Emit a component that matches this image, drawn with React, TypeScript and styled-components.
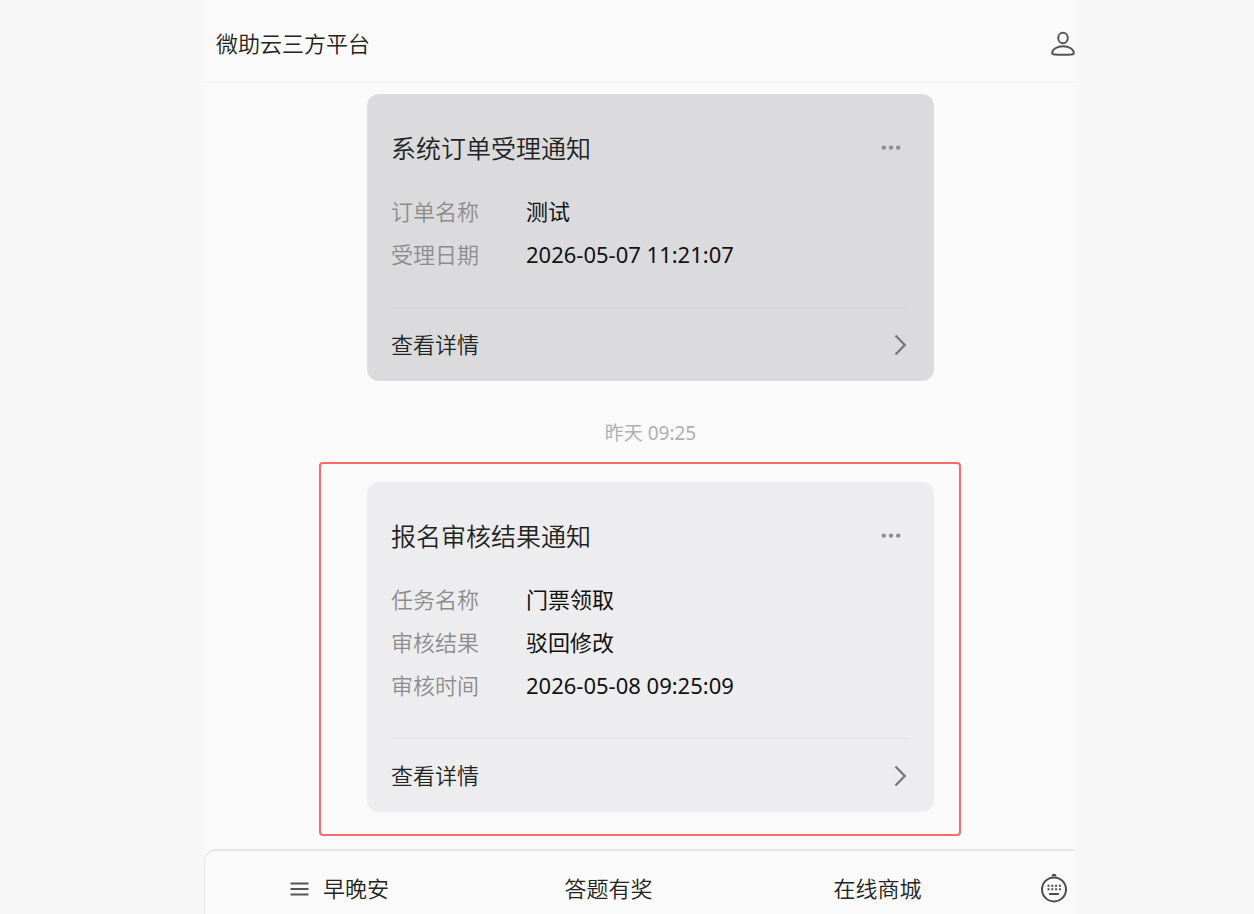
import React from "react";
import styled, { createGlobalStyle } from "styled-components";

const GlobalStyle = createGlobalStyle`
  *, *::before, *::after { box-sizing: border-box; }
  body {
    margin: 0;
    background: #f7f7f7;
    font-family: "Noto Sans", "Noto Sans CJK SC", sans-serif;
    font-size: 22px;
    font-weight: 350;
    line-height: 36px;
    color: #222;
  }
  button {
    border: 0;
    padding: 0;
    background: none;
    font: inherit;
    color: inherit;
    cursor: pointer;
  }
  svg { display: block; }
`;

const Page = styled.div`
  display: grid;
  grid-template-columns: 204fr 871fr 179fr;
  min-height: 100vh;
`;

const Panel = styled.div`
  grid-column: 2;
  display: flex;
  flex-direction: column;
  min-width: 0;
  background: #fafafa;
`;

const Header = styled.header`
  display: flex;
  align-items: center;
  justify-content: space-between;
  padding: 25px 0 20px 12px;
  border-bottom: 2px solid #f3f3f3;
`;

const HeaderTitle = styled.h1`
  margin: 0;
  font-size: 22px;
  font-weight: inherit;
`;

const Messages = styled.main`
  flex: 1;
  display: flex;
  flex-direction: column;
  padding: 11px 114px 13px 115px;
`;

const Message = styled.div`
  padding: 0 27px 0 48px;
`;

const Highlight = styled.div`
  padding: 18px 25px 22px 46px;
  border: 2px solid #fb6a6a;
  border-radius: 4px;
`;

const TimeStamp = styled.time`
  display: block;
  padding: 38px 27px 15px 48px;
  text-align: center;
  font-size: 19px;
  font-weight: 400;
  line-height: 28px;
  color: #b0b0b4;
`;

const Card = styled.article<{ $pressed?: boolean }>`
  padding: 36px 24px 0;
  border-radius: 12px;
  background: ${(p) => (p.$pressed ? "#dbdbdd" : "#ededef")};
`;

const CardHead = styled.div`
  display: flex;
  align-items: center;
  justify-content: space-between;
`;

const CardTitle = styled.h2`
  margin: 0;
  font-size: 25px;
  font-weight: inherit;
`;

const MoreButton = styled.button`
  padding: 8px;
`;

const Fields = styled.dl`
  margin: 24px 0 31px;
`;

const Field = styled.div`
  display: flex;
  line-height: 43px;
`;

const Label = styled.dt`
  width: 135px;
  color: #8c8c8d;
`;

const Value = styled.dd`
  margin: 0;
  font-weight: 400;
  color: #111;
`;

const DetailLink = styled.a`
  display: flex;
  align-items: center;
  justify-content: space-between;
  height: 74px;
  padding-bottom: 2px;
  border-top: 1px solid rgba(0, 0, 0, 0.04);
  color: inherit;
  text-decoration: none;
`;

const Footer = styled.footer`
  display: flex;
  align-items: center;
  padding: 19px 0 8px;
  border-top: 2px solid #e6e6e6;
  border-left: 1px solid #e6e6e6;
  border-top-left-radius: 12px;
`;

const Menu = styled.nav`
  flex: 1;
  display: grid;
  grid-template-columns: repeat(3, 1fr);
`;

const MenuButton = styled.button`
  display: flex;
  align-items: center;
  justify-content: center;
  gap: 14px;
`;

const KeyboardButton = styled.button`
  display: flex;
  justify-content: flex-end;
  width: 63px;
  padding-right: 7px;
`;

const PersonIcon = () => (
  <svg width="24" height="26" viewBox="0 0 24 26" fill="none" stroke="#555" strokeWidth="2" aria-hidden="true">
    <ellipse cx="12" cy="8" rx="4.8" ry="5.2" />
    <path d="M1.2 23C1.2 19.4 6 16.2 12 16.2S22.8 19.4 22.8 23C22.8 24.1 22 24.3 20.5 24.4C15 24.9 9 24.9 3.5 24.4C2 24.3 1.2 24.1 1.2 23Z" />
  </svg>
);

const DotsIcon = () => (
  <svg width="22" height="6" viewBox="0 0 22 6" fill="#8e8e90" aria-hidden="true">
    <circle cx="3.8" cy="2.6" r="2.2" />
    <circle cx="11" cy="2.6" r="2.2" />
    <circle cx="18.2" cy="2.6" r="2.2" />
  </svg>
);

const ChevronIcon = () => (
  <svg width="18" height="22" viewBox="0 0 18 22" fill="none" stroke="#777779" strokeWidth="2.3" aria-hidden="true">
    <path d="M3.5 2.5L12.8 12L3.5 21.5" />
  </svg>
);

const MenuIcon = () => (
  <svg width="19" height="16" viewBox="0 0 19 16" stroke="#555" strokeWidth="2" aria-hidden="true">
    <path d="M0.5 3.5H18.5M0.5 9H18.5M0.5 14.5H18.5" />
  </svg>
);

const KeyboardIcon = () => (
  <svg width="28" height="32" viewBox="0 0 28 32" fill="none" stroke="#4c4c4c" strokeWidth="2" aria-hidden="true">
    <circle cx="14" cy="17.4" r="12" />
    <path d="M11.5 4.2C11.8 1 16.2 1 16.5 4.2Z" fill="#4c4c4c" stroke="none" />
    <path d="M7.5 13.8H21M7.5 17.2H21" strokeDasharray="2 1.8" />
    <path d="M9.8 22H18.2" strokeLinecap="round" />
  </svg>
);

type Notice = { title: string; fields: [string, string][] };

const orderNotice: Notice = {
  title: "系统订单受理通知",
  fields: [
    ["订单名称", "测试"],
    ["受理日期", "2026-05-07 11:21:07"],
  ],
};

const reviewNotice: Notice = {
  title: "报名审核结果通知",
  fields: [
    ["任务名称", "门票领取"],
    ["审核结果", "驳回修改"],
    ["审核时间", "2026-05-08 09:25:09"],
  ],
};

function NoticeCard({ notice, pressed }: { notice: Notice; pressed?: boolean }) {
  return (
    <Card $pressed={pressed}>
      <CardHead>
        <CardTitle>{notice.title}</CardTitle>
        <MoreButton type="button" aria-label="更多">
          <DotsIcon />
        </MoreButton>
      </CardHead>
      <Fields>
        {notice.fields.map(([label, value]) => (
          <Field key={label}>
            <Label>{label}</Label>
            <Value>{value}</Value>
          </Field>
        ))}
      </Fields>
      <DetailLink href="#detail">
        查看详情
        <ChevronIcon />
      </DetailLink>
    </Card>
  );
}

export default function App() {
  return (
    <>
      <GlobalStyle />
      <Page>
        <Panel>
          <Header>
            <HeaderTitle>微助云三方平台</HeaderTitle>
            <button type="button" aria-label="个人资料">
              <PersonIcon />
            </button>
          </Header>
          <Messages>
            <Message>
              <NoticeCard notice={orderNotice} pressed />
            </Message>
            <TimeStamp>昨天 09:25</TimeStamp>
            <Highlight>
              <NoticeCard notice={reviewNotice} />
            </Highlight>
          </Messages>
          <Footer>
            <Menu>
              <MenuButton type="button">
                <MenuIcon />
                早晚安
              </MenuButton>
              <MenuButton type="button">答题有奖</MenuButton>
              <MenuButton type="button">在线商城</MenuButton>
            </Menu>
            <KeyboardButton type="button" aria-label="键盘">
              <KeyboardIcon />
            </KeyboardButton>
          </Footer>
        </Panel>
      </Page>
    </>
  );
}
